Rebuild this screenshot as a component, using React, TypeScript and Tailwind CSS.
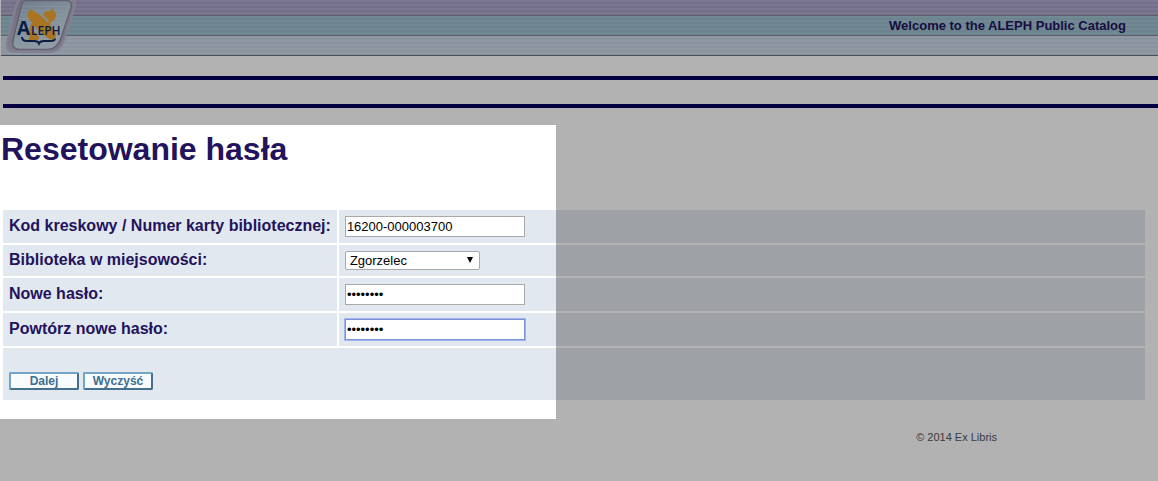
import { useState } from "react";

function AlephLogo() {
  return (
    <svg width="77" height="55" viewBox="0 0 77 55" role="img" aria-label="Aleph" className="block">
      <defs>
        <linearGradient id="rim" x1="0" y1="0" x2="1" y2="0.4">
          <stop offset="0" stopColor="#85829a" />
          <stop offset="0.3" stopColor="#b3b0c6" />
          <stop offset="0.7" stopColor="#c6c2d6" />
          <stop offset="1" stopColor="#aaa6bd" />
        </linearGradient>
        <linearGradient id="face" x1="0" y1="0" x2="0.5" y2="1">
          <stop offset="0" stopColor="#9fb0c6" />
          <stop offset="0.5" stopColor="#b9cede" />
          <stop offset="1" stopColor="#d3e0ec" />
        </linearGradient>
      </defs>
      <path d="M20-2 H71 Q76 0 75 6 L64 40 Q60 53 48 53 H13 Q4 53 5 43 L13 8 Q15 1 20-2Z" fill="#bcb8ce" />
      <path d="M22-3 H67 Q75-1 73 7 L62 40 Q58 51 48 51.500 H15 Q6 51 7 42 L16 7 Q18 0 22-3Z" fill="url(#rim)" />
      <path d="M25 0.500 H65 Q72 1 70 8 L60 38 Q56 49 47 49.500 H18 Q10 49 12 40 L20 7 Q21 1 25 0.500Z" fill="url(#face)" stroke="#8c8ca4" strokeWidth="1.5" />
      <g stroke="#dce8f2" strokeWidth="1" opacity="0.3">
        <path d="M21 6.500H68M20 10.500H67M19 14.500H66M18 18.500H64M17 22.500H63M16 26.500H62M15 30.500H61M14 34.500H59M14 38.500H58M13 42.500H56M15 46.500H52" />
      </g>
      <path d="M26 16 Q27 10 31 9 Q33 13 38 14 L47 22.500 Q49 21 45 18 L42 15 L45 11 Q50 12 51 8 L55 14 Q56 19 50 22 L49 25 Q55 30 55 36 L52 40 Q47 39 44 36 L33 26 Q31 30 35 34 Q40 37 37 40 H27 Q30 36 28 32 Q28 27 31 23Z" fill="#f2a833" />
      <g fill="#10295f" fontFamily="'Open Sans', sans-serif">
        <text x="16" y="35" fontSize="19" fontWeight="700">A</text>
        <text x="30" y="35" fontSize="12" fontWeight="600">LEPH</text>
      </g>
      <path d="M21 37 Q21 41 26 41 H33 Q37 41 38 43.500 Q39 41 43 41 H49 Q54 41 54 38.500" fill="none" stroke="#10295f" strokeWidth="2" />
    </svg>
  );
}

const labelCell = "whitespace-nowrap bg-[#e2e8f0] px-1.5 pb-0.5 text-left align-middle font-bold";
const fieldCell = "w-full bg-[#e2e8f0] px-1.5 align-middle";
const textField =
  "block h-[21px] w-[180px] border bg-white px-px text-[13px] leading-4 text-black outline-none";
const formButton =
  "h-[18px] w-[70px] rounded-xs border-2 border-t-[#74a5c6] border-l-[#74a5c6] border-r-[#446f8d] border-b-[#446f8d] bg-[#f8fbfe] text-xs leading-3 font-bold text-[#3e6f90]";

export default function App() {
  const [code, setCode] = useState("16200-000003700");
  const [password, setPassword] = useState("haslo123");
  const [repeated, setRepeated] = useState("haslo123");

  return (
    <div className="relative min-h-screen overflow-hidden bg-white font-['Liberation_Sans',Arial,sans-serif] text-[#22135c]">
      <header className="ml-px">
        <div className="grid">
          <div className="col-start-1 row-start-1">
            <div className="h-4 border-b border-[#85889a] bg-[repeating-linear-gradient(#b4add0_0_2px,#a7a0c4_2px_4px)]" />
            <div className="flex h-5 items-center justify-end border-b border-[#85889a] bg-[repeating-linear-gradient(#a3c5d6_0_2px,#9dbccc_2px_4px)] pr-8 text-[13px] font-bold">
              Welcome to the ALEPH Public Catalog
            </div>
            <div className="h-5 border-b border-[#62717a] bg-[repeating-linear-gradient(#cddaea_0_2px,#c8d3e4_2px_4px)]" />
          </div>
          <div className="col-start-1 row-start-1 w-fit">
            <AlephLogo />
          </div>
        </div>
      </header>

      <hr className="mt-5 ml-[3px] border-t-4 border-[#0a0060]" />
      <hr className="mt-6 ml-[3px] border-t-4 border-[#0a0060]" />

      <main className="relative mt-[17px] pb-[17px]">
        <div
          aria-hidden="true"
          className="pointer-events-none absolute inset-y-0 left-0 z-10 w-[556px] shadow-[0_0_0_3000px_rgba(0,0,0,0.3)]"
        />
        <h1 className="pt-1 pl-px text-[32px] leading-10 font-bold">Resetowanie hasła</h1>
        <form className="mt-[39px] mr-[11px] ml-px" onSubmit={(event) => event.preventDefault()}>
          <table className="w-full border-separate border-spacing-0.5 text-base leading-5">
            <tbody>
              <tr className="h-[33px]">
                <th scope="row" className={labelCell}>
                  <label htmlFor="code">Kod kreskowy / Numer karty bibliotecznej:</label>
                </th>
                <td className={fieldCell}>
                  <input id="code" type="text" className={`${textField} border-[#a9a9a9]`} value={code} onChange={(e) => setCode(e.target.value)} />
                </td>
              </tr>
              <tr className="h-[31px]">
                <th scope="row" className={labelCell}>
                  <label htmlFor="library">Biblioteka w miejsowości:</label>
                </th>
                <td className={fieldCell}>
                  <div className="relative w-[135px]">
                    <select
                      id="library"
                      className="block h-[19px] w-full appearance-none rounded-xs border border-[#a9a9a9] bg-white px-1 text-[13px] leading-4 text-black"
                    >
                      <option>Zgorzelec</option>
                    </select>
                    <svg width="6" height="6" viewBox="0 0 6 6" aria-hidden="true" className="pointer-events-none absolute top-1.5 right-[7px]">
                      <path d="M0 0H6L3 6Z" fill="#000" />
                    </svg>
                  </div>
                </td>
              </tr>
              <tr className="h-[33px]">
                <th scope="row" className={labelCell}>
                  <label htmlFor="password">Nowe hasło:</label>
                </th>
                <td className={fieldCell}>
                  <input id="password" type="password" className={`${textField} border-[#a9a9a9]`} value={password} onChange={(e) => setPassword(e.target.value)} />
                </td>
              </tr>
              <tr className="h-[33px]">
                <th scope="row" className={labelCell}>
                  <label htmlFor="repeated">Powtórz nowe hasło:</label>
                </th>
                <td className={fieldCell}>
                  <input id="repeated" type="password" className={`${textField} border-[#7b93d6] shadow-[0_0_0_1px_#9fb4f0]`} value={repeated} onChange={(e) => setRepeated(e.target.value)} />
                </td>
              </tr>
              <tr>
                <td colSpan={2} className="h-[52px] bg-[#e2e8f0] px-1.5 pt-6 align-top">
                  <div className="flex gap-1">
                    <button type="submit" className={formButton}>Dalej</button>
                    <button type="reset" className={formButton}>Wyczyść</button>
                  </div>
                </td>
              </tr>
            </tbody>
          </table>
        </form>
      </main>

      <footer className="mt-2.5 mr-[161px] text-right text-[11px] leading-4 text-[#555]">© 2014 Ex Libris</footer>
    </div>
  );
}
